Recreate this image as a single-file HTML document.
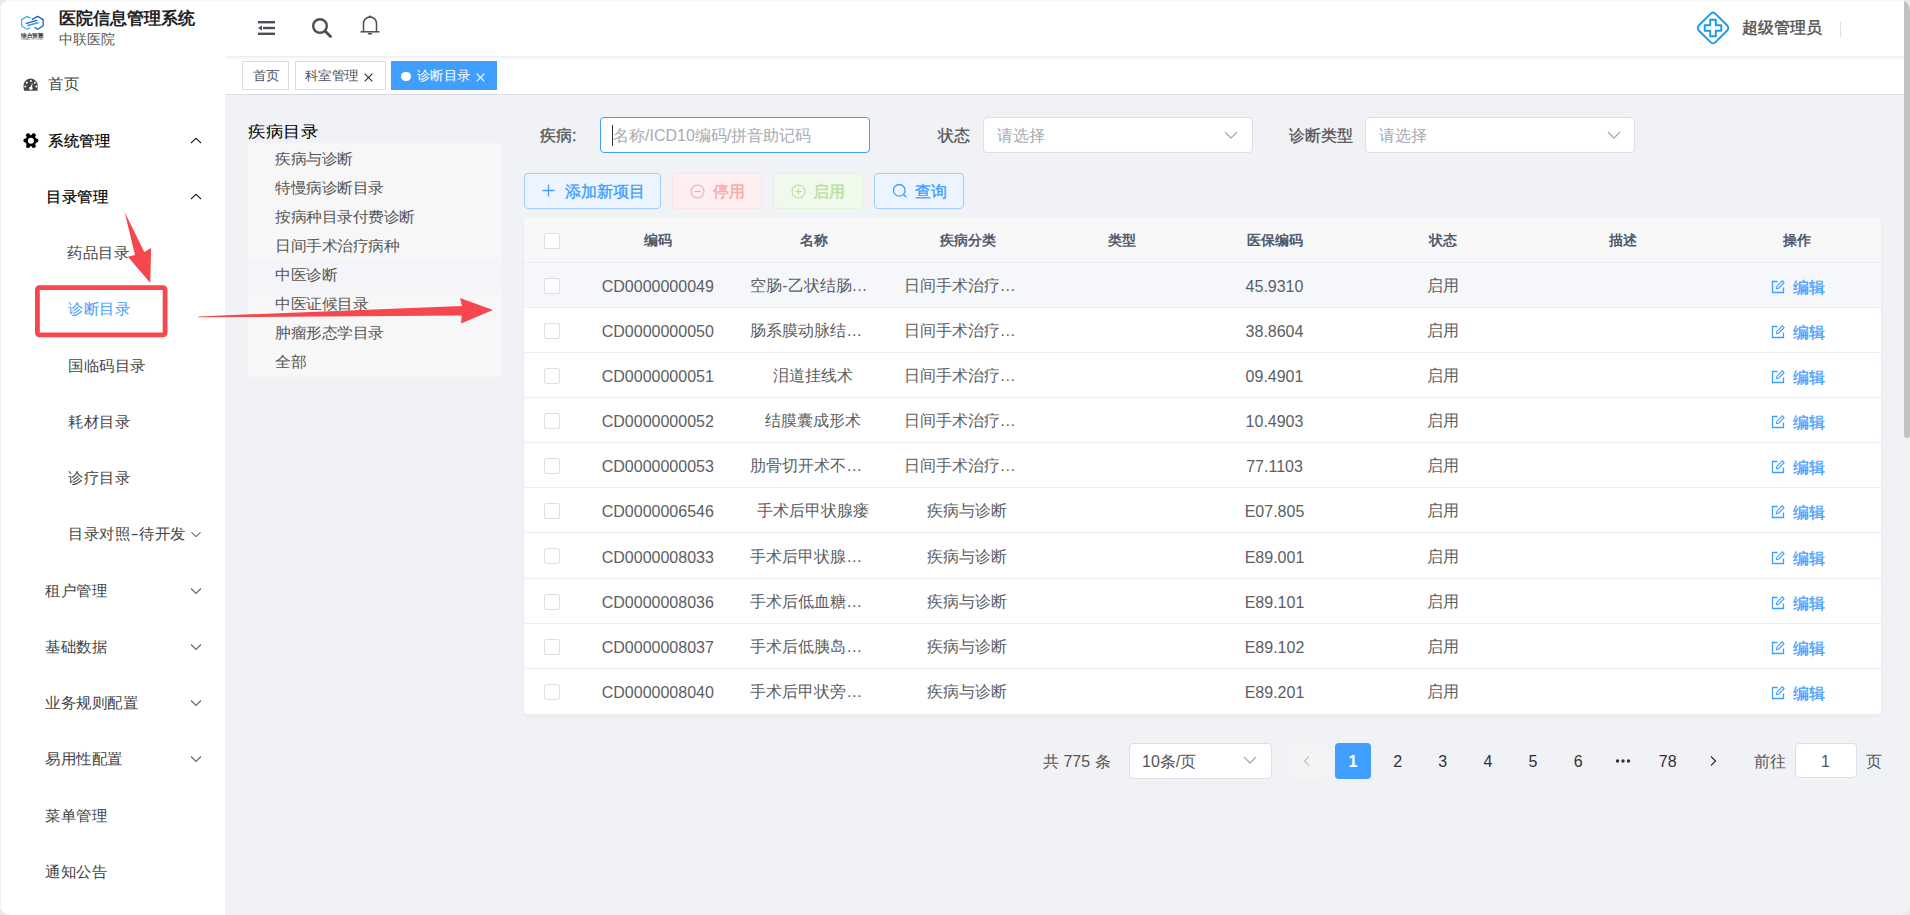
<!DOCTYPE html>
<html><head><meta charset="utf-8"><style>
*{box-sizing:border-box}
html,body{margin:0;padding:0}
body{width:1910px;height:915px;position:relative;overflow:hidden;background:#e9e9e9;font-family:"Liberation Sans",sans-serif;color:#303133}
.win{position:absolute;left:0;top:0;width:1910px;height:915px;background:#f0f2f5;border-radius:10px;overflow:hidden}
.a{position:absolute;white-space:nowrap}
.side{position:absolute;left:0;top:0;width:225px;height:915px;background:#fff}
.hdr{position:absolute;left:225px;top:0;width:1679px;height:56px;background:#fff}
.tabs{position:absolute;left:225px;top:56px;width:1679px;height:39px;background:#fff;border-bottom:1px solid #d8dce5;box-shadow:inset 0 4px 3px -2px #eceef1}
.tab{position:absolute;top:61px;height:29px;border:1px solid #d8dce5;background:#fff;font-size:13px;line-height:27px;color:#495060;white-space:nowrap}
.tt{display:inline-block;transform-origin:0 60%;transform:scale(0.955,0.92)}
.mi{position:absolute;font-size:16px;line-height:20px;transform-origin:0 50%;transform:scale(0.97,0.94);color:#303133;white-space:nowrap}
.scroll{position:absolute;left:1904px;top:0;width:6px;height:915px;background:#f1f1f1}
.thumb{position:absolute;left:1904px;top:0;width:6px;height:438px;background:#c1c1c1;border-radius:0 0 3px 3px}
.tree{position:absolute;left:248px;top:143px;width:253px;height:234px;background:#f7f7f8}
.ti{position:absolute;left:275px;font-size:16px;line-height:20px;transform-origin:0 50%;transform:scale(0.97,0.92);color:#555;white-space:nowrap}
.lbl{position:absolute;font-size:16px;line-height:20px;color:#555;white-space:nowrap;-webkit-text-stroke:0.3px currentColor}
.inp{position:absolute;background:#fff;border:1px solid #dcdfe6;border-radius:4px}
.ph{position:absolute;font-size:16px;line-height:20px;color:#a8abb2;white-space:nowrap}
.btn{position:absolute;top:173px;height:36px;border:1px solid;border-radius:4px}
.bt{position:absolute;font-size:16px;line-height:20px;white-space:nowrap;-webkit-text-stroke:0.35px currentColor}
.tbl{position:absolute;left:524px;top:218px;width:1357px;height:496px;background:#fff;border-radius:4px;overflow:hidden;box-shadow:0 2px 4px rgba(0,0,0,.04)}
.row{position:absolute;left:0;width:1357px;border-bottom:1px solid #ebeef5}
.cb{position:absolute;left:20px;width:16px;height:16px;border:1px solid #dcdfe6;border-radius:2px;background:#fff}
.th{position:absolute;font-size:14px;line-height:20px;color:#515a6e;font-weight:bold;white-space:nowrap;text-align:center}
.td{position:absolute;font-size:16px;line-height:20px;color:#5b5e63;white-space:nowrap;text-align:center}
.pg{position:absolute;font-size:16px;line-height:20px;color:#303133;white-space:nowrap;text-align:center}
</style></head><body><div class="win">
<div class="side"></div>
<svg class="a" style="left:17px;top:12px" width="32" height="32" viewBox="0 0 32 32">
<path d="M13.6 6.4 L10.1 4.4 L4.6 7.6 L4.6 14 L10.1 17.2 L13 15.5" fill="none" stroke="#45b1f0" stroke-width="1.3" stroke-linejoin="round"/>
<path d="M17.6 15.2 L20.6 17.2 L26.1 14 L26.1 7.6 L20.6 4.4 L14.9 7.6" fill="none" stroke="#1f5fc4" stroke-width="1.3" stroke-linejoin="round"/>
<path d="M9.4 11.3 L19.9 8.4" stroke="#1f63c8" stroke-width="1.4" stroke-linecap="round"/>
<path d="M10.8 13.5 L21 10.8" stroke="#2aa3ef" stroke-width="1.4" stroke-linecap="round"/>
<text x="4.2" y="24.6" font-size="5.2" font-weight="bold" fill="#333" textLength="22.6" lengthAdjust="spacingAndGlyphs">综合智慧</text>
<text x="4.2" y="28.2" font-size="2.6" fill="#666" textLength="22" lengthAdjust="spacingAndGlyphs">HEALTH LINK</text>
</svg>
<div class="a" style="left:59px;top:9px;font-size:17px;line-height:20px;font-weight:bold;color:#222">医院信息管理系统</div>
<div class="a" style="left:59px;top:29px;font-size:14px;line-height:20px;color:#555">中联医院</div>
<svg class="a" style="left:20px;top:75px" width="22" height="20" viewBox="0 0 22 20">
<path d="M4.1 15.8 L3.5 12.6 A7.3 7.3 0 1 1 17.7 12.6 L17.5 15.8 Z" fill="#444"/>
<circle cx="10.9" cy="5.9" r="1" fill="#fff"/><circle cx="6.9" cy="7.7" r="1" fill="#fff"/><circle cx="14.9" cy="7.7" r="1" fill="#fff"/>
<circle cx="5.3" cy="11.4" r="1" fill="#fff"/><circle cx="16.3" cy="11.4" r="1" fill="#fff"/>
<path d="M10.3 13 L12 8.2 L12.7 8.4 L11.6 13.2 Z" fill="#fff"/><circle cx="10.9" cy="13.2" r="1.7" fill="#fff"/>
</svg>
<svg class="a" style="left:20px;top:130px" width="22" height="22" viewBox="0 0 22 22">
<circle cx="10.9" cy="10.6" r="5.6" fill="#000"/>
<circle cx="8.1" cy="5.3" r="2.1" fill="#000"/><circle cx="13.7" cy="5.3" r="2.1" fill="#000"/>
<circle cx="16.3" cy="10.6" r="2.1" fill="#000"/><circle cx="5.5" cy="10.6" r="2.1" fill="#000"/>
<circle cx="8.1" cy="15.9" r="2.1" fill="#000"/><circle cx="13.7" cy="15.9" r="2.1" fill="#000"/>
<circle cx="10.9" cy="10.7" r="3" fill="#fff"/>
</svg>
<div class="mi" style="left:48.0px;top:74px;color:#444">首页</div>
<div class="mi" style="left:48.0px;top:131px;color:#000;-webkit-text-stroke:0.25px #000">系统管理</div>
<svg class="a" style="left:190px;top:136.8px" width="12" height="8" viewBox="0 0 12 8"><path d="M1 6L6 1.3L11 6" fill="none" stroke="#222" stroke-width="1.05"/></svg>
<div class="mi" style="left:46.2px;top:187px;color:#000;-webkit-text-stroke:0.25px #000">目录管理</div>
<svg class="a" style="left:190px;top:192.8px" width="12" height="8" viewBox="0 0 12 8"><path d="M1 6L6 1.3L11 6" fill="none" stroke="#222" stroke-width="1.05"/></svg>
<div class="mi" style="left:67.2px;top:243px;color:#444">药品目录</div>
<div class="mi" style="left:67.5px;top:299px;color:#409eff">诊断目录</div>
<div class="mi" style="left:67.5px;top:356px;color:#444">国临码目录</div>
<div class="mi" style="left:67.5px;top:412px;color:#444">耗材目录</div>
<div class="mi" style="left:67.5px;top:468px;color:#444">诊疗目录</div>
<div class="mi" style="left:68.0px;top:524px;color:#444">目录对照<span style="margin:0 2.4px 0 1.6px;display:inline-block;transform:scaleX(1.6)">-</span>待开发</div>
<svg class="a" style="left:190px;top:531.2px" width="12" height="8" viewBox="0 0 12 8"><path d="M1.5 1.3L6 5.6L10.5 1.3" fill="none" stroke="#606266" stroke-width="1.05"/></svg>
<div class="mi" style="left:44.5px;top:581px;color:#444">租户管理</div>
<svg class="a" style="left:190px;top:587px" width="12" height="8" viewBox="0 0 12 8"><path d="M1 1.5L6 6.5L11 1.5" fill="none" stroke="#606266" stroke-width="1.1"/></svg>
<div class="mi" style="left:44.5px;top:637px;color:#444">基础数据</div>
<svg class="a" style="left:190px;top:643px" width="12" height="8" viewBox="0 0 12 8"><path d="M1 1.5L6 6.5L11 1.5" fill="none" stroke="#606266" stroke-width="1.1"/></svg>
<div class="mi" style="left:44.5px;top:693px;color:#444">业务规则配置</div>
<svg class="a" style="left:190px;top:699px" width="12" height="8" viewBox="0 0 12 8"><path d="M1 1.5L6 6.5L11 1.5" fill="none" stroke="#606266" stroke-width="1.1"/></svg>
<div class="mi" style="left:44.5px;top:749px;color:#444">易用性配置</div>
<svg class="a" style="left:190px;top:755px" width="12" height="8" viewBox="0 0 12 8"><path d="M1 1.5L6 6.5L11 1.5" fill="none" stroke="#606266" stroke-width="1.1"/></svg>
<div class="mi" style="left:44.5px;top:806px;color:#444">菜单管理</div>
<div class="mi" style="left:44.5px;top:862px;color:#444">通知公告</div>
<div class="hdr"></div>
<div class="tabs"></div>
<svg class="a" style="left:257px;top:20px" width="19" height="16" viewBox="0 0 19 16">
<rect x="1" y="1" width="17" height="2.4" fill="#4a4f57"/>
<rect x="6" y="6.8" width="12" height="2.4" fill="#4a4f57"/>
<path d="M1 8 L5 5.4 L5 10.6 Z" fill="#4a4f57"/>
<rect x="1" y="12.6" width="17" height="2.4" fill="#4a4f57"/>
</svg>
<svg class="a" style="left:311px;top:17px" width="22" height="22" viewBox="0 0 22 22">
<circle cx="9" cy="9" r="6.8" fill="none" stroke="#4a4f57" stroke-width="2.4"/>
<path d="M14 14 L19.5 19.5" stroke="#4a4f57" stroke-width="2.8" stroke-linecap="round"/>
</svg>
<svg class="a" style="left:359px;top:14px" width="22" height="22" viewBox="0 0 22 22">
<path d="M4.5 17.5 L4.5 9.5 A6.5 6.5 0 0 1 17.5 9.5 L17.5 17.5" fill="none" stroke="#4a4f57" stroke-width="1.5"/>
<path d="M1.5 17.8 L20.5 17.8" stroke="#4a4f57" stroke-width="1.5"/>
<circle cx="11" cy="2.6" r="1.2" fill="#4a4f57"/>
<path d="M9.5 19.8 L12.5 19.8" stroke="#4a4f57" stroke-width="1.5" stroke-linecap="round"/>
</svg>
<svg class="a" style="left:1696px;top:11px" width="34" height="34" viewBox="0 0 34 34">
<path d="M17 1.5 C18 1.5 18.7 2 19.5 2.8 L31.2 14.5 C32.6 15.9 32.6 18.1 31.2 19.5 L19.5 31.2 C18.1 32.6 15.9 32.6 14.5 31.2 L2.8 19.5 C1.4 18.1 1.4 15.9 2.8 14.5 L14.5 2.8 C15.3 2 16 1.5 17 1.5 Z" fill="none" stroke="#1a9be6" stroke-width="1.9"/>
<path d="M14.2 8.7 L19.8 8.7 L19.8 14.2 L25.3 14.2 L25.3 19.8 L19.8 19.8 L19.8 25.3 L14.2 25.3 L14.2 19.8 L8.7 19.8 L8.7 14.2 L14.2 14.2 Z" fill="none" stroke="#1a9be6" stroke-width="1.9" stroke-linejoin="round"/>
</svg>
<div class="a" style="left:1742px;top:18px;font-size:16px;line-height:20px;color:#555;-webkit-text-stroke:0.45px #555">超级管理员</div>
<div class="a" style="left:1840px;top:22px;width:1px;height:15px;background:#dcdfe6"></div>
<div class="tab" style="left:242px;width:47px;padding-left:9.5px;font-size:14px"><span class="tt">首页</span></div>
<div class="tab" style="left:295px;width:91px;padding-left:9px;font-size:14px"><span class="tt">科室管理</span></div>
<svg class="a" style="left:364px;top:73px" width="9" height="9" viewBox="0 0 9 9"><path d="M0.6 0.6L8.4 8.4M8.4 0.6L0.6 8.4" stroke="#303133" stroke-width="1.15"/></svg>
<div class="tab" style="left:391px;width:106px;background:#409eff;border-color:#409eff;color:#fff;padding-left:25px;font-size:14px"><span class="tt">诊断目录</span><span style="position:absolute;left:9px;top:9.5px;width:9.5px;height:9.5px;border-radius:50%;background:#fff"></span></div>
<svg class="a" style="left:476px;top:73px" width="9" height="9" viewBox="0 0 9 9"><path d="M0.6 0.6L8.4 8.4M8.4 0.6L0.6 8.4" stroke="#fff" stroke-width="1.15"/></svg>
<div class="a" style="left:248px;top:121.5px;font-size:18px;line-height:20px;color:#000;transform-origin:0 50%;transform:scale(0.985,0.9)">疾病目录</div>
<div class="tree"></div>
<div class="a" style="left:248px;top:260px;width:253px;height:29px;background:#f4f5f9"></div>
<div class="ti" style="top:148.50px">疾病与诊断</div>
<div class="ti" style="top:177.64px">特慢病诊断目录</div>
<div class="ti" style="top:206.78px">按病种目录付费诊断</div>
<div class="ti" style="top:235.92px">日间手术治疗病种</div>
<div class="ti" style="top:265.06px">中医诊断</div>
<div class="ti" style="top:294.20px">中医证候目录</div>
<div class="ti" style="top:323.34px">肿瘤形态学目录</div>
<div class="ti" style="top:352.48px">全部</div>
<div class="lbl" style="left:539.5px;top:125.5px">疾病</div>
<div class="lbl" style="left:572px;top:125.5px">:</div>
<div class="inp" style="left:600px;top:117px;width:270px;height:36px;border-color:#409eff"></div>
<div class="a" style="left:611.5px;top:125px;width:1.4px;height:21px;background:#333"></div>
<div class="ph" style="left:613px;top:125.5px">名称/ICD10编码/拼音助记码</div>
<div class="lbl" style="left:937.5px;top:125.5px">状态</div>
<div class="inp" style="left:983px;top:117px;width:269.5px;height:36px"></div>
<div class="ph" style="left:997px;top:125.5px">请选择</div>
<svg class="a" style="left:1223px;top:130px" width="16" height="10" viewBox="0 0 16 10"><path d="M2 2L8 8L14 2" fill="none" stroke="#a8abb2" stroke-width="1.3"/></svg>
<div class="lbl" style="left:1288.5px;top:125.5px">诊断类型</div>
<div class="inp" style="left:1365px;top:117px;width:269.5px;height:36px"></div>
<div class="ph" style="left:1379px;top:125.5px">请选择</div>
<svg class="a" style="left:1606px;top:130px" width="16" height="10" viewBox="0 0 16 10"><path d="M2 2L8 8L14 2" fill="none" stroke="#a8abb2" stroke-width="1.3"/></svg>
<div class="btn" style="left:524px;width:137px;background:#ecf5ff;border-color:#a0cfff"></div>
<svg class="a" style="left:541px;top:183px" width="15" height="15" viewBox="0 0 15 15"><path d="M7.5 1.5V13.5M1.5 7.5H13.5" stroke="#409eff" stroke-width="1.3"/></svg>
<div class="bt" style="left:564.5px;top:181.5px;color:#409eff">添加新项目</div>
<div class="btn" style="left:672px;width:90px;background:#fef0f0;border-color:#fde2e2"></div>
<svg class="a" style="left:690px;top:183.5px" width="15" height="15" viewBox="0 0 15 15"><circle cx="7.5" cy="7.5" r="6.5" fill="none" stroke="#f9a7a7" stroke-width="1.1"/><path d="M4.5 7.5H10.5" stroke="#f9a7a7" stroke-width="1.1"/></svg>
<div class="bt" style="left:712.5px;top:181.5px;color:#f9a7a7">停用</div>
<div class="btn" style="left:773px;width:90px;background:#f0f9eb;border-color:#e1f3d8"></div>
<svg class="a" style="left:791px;top:183.5px" width="15" height="15" viewBox="0 0 15 15"><circle cx="7.5" cy="7.5" r="6.5" fill="none" stroke="#b3e19d" stroke-width="1.1"/><path d="M4.5 7.5H10.5M7.5 4.5V10.5" stroke="#b3e19d" stroke-width="1.1"/></svg>
<div class="bt" style="left:813px;top:181.5px;color:#b3e19d">启用</div>
<div class="btn" style="left:874px;width:90px;background:#ecf5ff;border-color:#a0cfff"></div>
<svg class="a" style="left:892px;top:183px" width="16" height="16" viewBox="0 0 16 16"><circle cx="7.3" cy="7.3" r="5.8" fill="none" stroke="#409eff" stroke-width="1.3"/><path d="M11.5 11.5L14.3 14.3" stroke="#409eff" stroke-width="1.3"/></svg>
<div class="bt" style="left:914.5px;top:181.5px;color:#409eff">查询</div>
<div class="tbl">
<div class="row" style="top:0;height:44.5px;background:#f8f8f9"></div>
<div class="row" style="top:44.50px;height:45.15px;background:#f5f7fa;"></div>
<div class="row" style="top:89.65px;height:45.15px;background:#fff;"></div>
<div class="row" style="top:134.80px;height:45.15px;background:#fff;"></div>
<div class="row" style="top:179.95px;height:45.15px;background:#fff;"></div>
<div class="row" style="top:225.10px;height:45.15px;background:#fff;"></div>
<div class="row" style="top:270.25px;height:45.15px;background:#fff;"></div>
<div class="row" style="top:315.40px;height:45.15px;background:#fff;"></div>
<div class="row" style="top:360.55px;height:45.15px;background:#fff;"></div>
<div class="row" style="top:405.70px;height:45.15px;background:#fff;"></div>
<div class="row" style="top:450.85px;height:45.15px;background:#fff;border-bottom:none;"></div>
<div class="cb" style="top:14.5px"></div>
<div class="th" style="left:73.8px;width:120px;top:12px">编码</div>
<div class="th" style="left:229.8px;width:120px;top:12px">名称</div>
<div class="th" style="left:383.5px;width:120px;top:12px">疾病分类</div>
<div class="th" style="left:537.7px;width:120px;top:12px">类型</div>
<div class="th" style="left:691.3px;width:120px;top:12px">医保编码</div>
<div class="th" style="left:859.2px;width:120px;top:12px">状态</div>
<div class="th" style="left:1038.7px;width:120px;top:12px">描述</div>
<div class="th" style="left:1213.0px;width:120px;top:12px">操作</div>
<div class="cb" style="top:59.50px"></div>
<div class="td" style="left:53.8px;width:160px;top:58.60px">CD0000000049</div>
<div class="td" style="left:226.2px;text-align:left;top:57.60px">空肠-乙状结肠…</div>
<div class="td" style="left:379.7px;text-align:left;top:57.60px">日间手术治疗…</div>
<div class="td" style="left:670.5px;width:160px;top:58.60px">45.9310</div>
<div class="td" style="left:858.6px;width:120px;top:57.60px">启用</div>
<svg class="a" style="left:1246.5px;top:61.60px" width="14" height="14" viewBox="0 0 14 14"><path d="M6.5 1.5H1.5V12.5H12.5V7.5" fill="none" stroke="#409eff" stroke-width="1.3"/><path d="M5.5 8.5L5.8 6.4L11.3 0.9L13.1 2.7L7.6 8.2Z" fill="none" stroke="#409eff" stroke-width="1.1"/></svg>
<div class="td" style="left:1269px;text-align:left;top:59.60px;color:#409eff;-webkit-text-stroke:0.3px #409eff">编辑</div>
<div class="cb" style="top:104.65px"></div>
<div class="td" style="left:53.8px;width:160px;top:103.75px">CD0000000050</div>
<div class="td" style="left:226.2px;text-align:left;top:102.75px">肠系膜动脉结…</div>
<div class="td" style="left:379.7px;text-align:left;top:102.75px">日间手术治疗…</div>
<div class="td" style="left:670.5px;width:160px;top:103.75px">38.8604</div>
<div class="td" style="left:858.6px;width:120px;top:102.75px">启用</div>
<svg class="a" style="left:1246.5px;top:106.75px" width="14" height="14" viewBox="0 0 14 14"><path d="M6.5 1.5H1.5V12.5H12.5V7.5" fill="none" stroke="#409eff" stroke-width="1.3"/><path d="M5.5 8.5L5.8 6.4L11.3 0.9L13.1 2.7L7.6 8.2Z" fill="none" stroke="#409eff" stroke-width="1.1"/></svg>
<div class="td" style="left:1269px;text-align:left;top:104.75px;color:#409eff;-webkit-text-stroke:0.3px #409eff">编辑</div>
<div class="cb" style="top:149.80px"></div>
<div class="td" style="left:53.8px;width:160px;top:148.90px">CD0000000051</div>
<div class="td" style="left:208.5px;width:160px;top:147.90px">泪道挂线术</div>
<div class="td" style="left:379.7px;text-align:left;top:147.90px">日间手术治疗…</div>
<div class="td" style="left:670.5px;width:160px;top:148.90px">09.4901</div>
<div class="td" style="left:858.6px;width:120px;top:147.90px">启用</div>
<svg class="a" style="left:1246.5px;top:151.90px" width="14" height="14" viewBox="0 0 14 14"><path d="M6.5 1.5H1.5V12.5H12.5V7.5" fill="none" stroke="#409eff" stroke-width="1.3"/><path d="M5.5 8.5L5.8 6.4L11.3 0.9L13.1 2.7L7.6 8.2Z" fill="none" stroke="#409eff" stroke-width="1.1"/></svg>
<div class="td" style="left:1269px;text-align:left;top:149.90px;color:#409eff;-webkit-text-stroke:0.3px #409eff">编辑</div>
<div class="cb" style="top:194.95px"></div>
<div class="td" style="left:53.8px;width:160px;top:194.05px">CD0000000052</div>
<div class="td" style="left:208.5px;width:160px;top:193.05px">结膜囊成形术</div>
<div class="td" style="left:379.7px;text-align:left;top:193.05px">日间手术治疗…</div>
<div class="td" style="left:670.5px;width:160px;top:194.05px">10.4903</div>
<div class="td" style="left:858.6px;width:120px;top:193.05px">启用</div>
<svg class="a" style="left:1246.5px;top:197.05px" width="14" height="14" viewBox="0 0 14 14"><path d="M6.5 1.5H1.5V12.5H12.5V7.5" fill="none" stroke="#409eff" stroke-width="1.3"/><path d="M5.5 8.5L5.8 6.4L11.3 0.9L13.1 2.7L7.6 8.2Z" fill="none" stroke="#409eff" stroke-width="1.1"/></svg>
<div class="td" style="left:1269px;text-align:left;top:195.05px;color:#409eff;-webkit-text-stroke:0.3px #409eff">编辑</div>
<div class="cb" style="top:240.10px"></div>
<div class="td" style="left:53.8px;width:160px;top:239.20px">CD0000000053</div>
<div class="td" style="left:226.2px;text-align:left;top:238.20px">肋骨切开术不…</div>
<div class="td" style="left:379.7px;text-align:left;top:238.20px">日间手术治疗…</div>
<div class="td" style="left:670.5px;width:160px;top:239.20px">77.1103</div>
<div class="td" style="left:858.6px;width:120px;top:238.20px">启用</div>
<svg class="a" style="left:1246.5px;top:242.20px" width="14" height="14" viewBox="0 0 14 14"><path d="M6.5 1.5H1.5V12.5H12.5V7.5" fill="none" stroke="#409eff" stroke-width="1.3"/><path d="M5.5 8.5L5.8 6.4L11.3 0.9L13.1 2.7L7.6 8.2Z" fill="none" stroke="#409eff" stroke-width="1.1"/></svg>
<div class="td" style="left:1269px;text-align:left;top:240.20px;color:#409eff;-webkit-text-stroke:0.3px #409eff">编辑</div>
<div class="cb" style="top:285.25px"></div>
<div class="td" style="left:53.8px;width:160px;top:284.35px">CD0000006546</div>
<div class="td" style="left:208.5px;width:160px;top:283.35px">手术后甲状腺瘘</div>
<div class="td" style="left:362.5px;width:160px;top:283.35px">疾病与诊断</div>
<div class="td" style="left:670.5px;width:160px;top:284.35px">E07.805</div>
<div class="td" style="left:858.6px;width:120px;top:283.35px">启用</div>
<svg class="a" style="left:1246.5px;top:287.35px" width="14" height="14" viewBox="0 0 14 14"><path d="M6.5 1.5H1.5V12.5H12.5V7.5" fill="none" stroke="#409eff" stroke-width="1.3"/><path d="M5.5 8.5L5.8 6.4L11.3 0.9L13.1 2.7L7.6 8.2Z" fill="none" stroke="#409eff" stroke-width="1.1"/></svg>
<div class="td" style="left:1269px;text-align:left;top:285.35px;color:#409eff;-webkit-text-stroke:0.3px #409eff">编辑</div>
<div class="cb" style="top:330.40px"></div>
<div class="td" style="left:53.8px;width:160px;top:329.50px">CD0000008033</div>
<div class="td" style="left:226.2px;text-align:left;top:328.50px">手术后甲状腺…</div>
<div class="td" style="left:362.5px;width:160px;top:328.50px">疾病与诊断</div>
<div class="td" style="left:670.5px;width:160px;top:329.50px">E89.001</div>
<div class="td" style="left:858.6px;width:120px;top:328.50px">启用</div>
<svg class="a" style="left:1246.5px;top:332.50px" width="14" height="14" viewBox="0 0 14 14"><path d="M6.5 1.5H1.5V12.5H12.5V7.5" fill="none" stroke="#409eff" stroke-width="1.3"/><path d="M5.5 8.5L5.8 6.4L11.3 0.9L13.1 2.7L7.6 8.2Z" fill="none" stroke="#409eff" stroke-width="1.1"/></svg>
<div class="td" style="left:1269px;text-align:left;top:330.50px;color:#409eff;-webkit-text-stroke:0.3px #409eff">编辑</div>
<div class="cb" style="top:375.55px"></div>
<div class="td" style="left:53.8px;width:160px;top:374.65px">CD0000008036</div>
<div class="td" style="left:226.2px;text-align:left;top:373.65px">手术后低血糖…</div>
<div class="td" style="left:362.5px;width:160px;top:373.65px">疾病与诊断</div>
<div class="td" style="left:670.5px;width:160px;top:374.65px">E89.101</div>
<div class="td" style="left:858.6px;width:120px;top:373.65px">启用</div>
<svg class="a" style="left:1246.5px;top:377.65px" width="14" height="14" viewBox="0 0 14 14"><path d="M6.5 1.5H1.5V12.5H12.5V7.5" fill="none" stroke="#409eff" stroke-width="1.3"/><path d="M5.5 8.5L5.8 6.4L11.3 0.9L13.1 2.7L7.6 8.2Z" fill="none" stroke="#409eff" stroke-width="1.1"/></svg>
<div class="td" style="left:1269px;text-align:left;top:375.65px;color:#409eff;-webkit-text-stroke:0.3px #409eff">编辑</div>
<div class="cb" style="top:420.70px"></div>
<div class="td" style="left:53.8px;width:160px;top:419.80px">CD0000008037</div>
<div class="td" style="left:226.2px;text-align:left;top:418.80px">手术后低胰岛…</div>
<div class="td" style="left:362.5px;width:160px;top:418.80px">疾病与诊断</div>
<div class="td" style="left:670.5px;width:160px;top:419.80px">E89.102</div>
<div class="td" style="left:858.6px;width:120px;top:418.80px">启用</div>
<svg class="a" style="left:1246.5px;top:422.80px" width="14" height="14" viewBox="0 0 14 14"><path d="M6.5 1.5H1.5V12.5H12.5V7.5" fill="none" stroke="#409eff" stroke-width="1.3"/><path d="M5.5 8.5L5.8 6.4L11.3 0.9L13.1 2.7L7.6 8.2Z" fill="none" stroke="#409eff" stroke-width="1.1"/></svg>
<div class="td" style="left:1269px;text-align:left;top:420.80px;color:#409eff;-webkit-text-stroke:0.3px #409eff">编辑</div>
<div class="cb" style="top:465.85px"></div>
<div class="td" style="left:53.8px;width:160px;top:464.95px">CD0000008040</div>
<div class="td" style="left:226.2px;text-align:left;top:463.95px">手术后甲状旁…</div>
<div class="td" style="left:362.5px;width:160px;top:463.95px">疾病与诊断</div>
<div class="td" style="left:670.5px;width:160px;top:464.95px">E89.201</div>
<div class="td" style="left:858.6px;width:120px;top:463.95px">启用</div>
<svg class="a" style="left:1246.5px;top:467.95px" width="14" height="14" viewBox="0 0 14 14"><path d="M6.5 1.5H1.5V12.5H12.5V7.5" fill="none" stroke="#409eff" stroke-width="1.3"/><path d="M5.5 8.5L5.8 6.4L11.3 0.9L13.1 2.7L7.6 8.2Z" fill="none" stroke="#409eff" stroke-width="1.1"/></svg>
<div class="td" style="left:1269px;text-align:left;top:465.95px;color:#409eff;-webkit-text-stroke:0.3px #409eff">编辑</div>
</div>
<div class="pg" style="left:1043px;top:752px;color:#555">共 775 条</div>
<div class="inp" style="left:1128.5px;top:743px;width:143px;height:36px"></div>
<div class="pg" style="left:1142px;top:752px;color:#555">10条/页</div>
<svg class="a" style="left:1242px;top:755px" width="16" height="10" viewBox="0 0 16 10"><path d="M2 2L8 8L14 2" fill="none" stroke="#a8abb2" stroke-width="1.3"/></svg>
<div class="a" style="left:1290px;top:743px;width:36px;height:36px;background:#f4f4f5;border-radius:3px"></div>
<svg class="a" style="left:1301px;top:755px" width="12" height="12" viewBox="0 0 12 12"><path d="M8 1.5L3.5 6L8 10.5" fill="none" stroke="#c0c4cc" stroke-width="1.2"/></svg>
<div class="a" style="left:1335px;top:743px;width:36px;height:36px;background:#409eff;border-radius:4px"></div>
<div class="pg" style="left:1335px;top:751.5px;width:36px;color:#fff;font-weight:bold">1</div>
<div class="pg" style="left:1379.7px;width:36px;top:751.5px">2</div>
<div class="pg" style="left:1424.7px;width:36px;top:751.5px">3</div>
<div class="pg" style="left:1469.9px;width:36px;top:751.5px">4</div>
<div class="pg" style="left:1514.9px;width:36px;top:751.5px">5</div>
<div class="pg" style="left:1560.1px;width:36px;top:751.5px">6</div>
<div class="pg" style="left:1649.7px;width:36px;top:751.5px">78</div>
<svg class="a" style="left:1613px;top:757px" width="20" height="8" viewBox="0 0 20 8"><circle cx="4.5" cy="4" r="1.7" fill="#303133"/><circle cx="10" cy="4" r="1.7" fill="#303133"/><circle cx="15.5" cy="4" r="1.7" fill="#303133"/></svg>
<svg class="a" style="left:1707px;top:755px" width="12" height="12" viewBox="0 0 12 12"><path d="M4 1.5L8.5 6L4 10.5" fill="none" stroke="#303133" stroke-width="1.2"/></svg>
<div class="pg" style="left:1754px;top:752px;color:#555">前往</div>
<div class="inp" style="left:1794.5px;top:743px;width:62px;height:35px"></div>
<div class="pg" style="left:1794.5px;width:62px;top:751.5px;color:#555">1</div>
<div class="pg" style="left:1866px;top:752px;color:#555">页</div>
<svg class="a" style="left:0;top:0" width="520" height="360" viewBox="0 0 520 360">
<rect x="37.4" y="287.6" width="127.7" height="47.2" rx="2" fill="none" stroke="#f5474d" stroke-width="4.8"/>
<path d="M124.6 212 L135 255 L127.9 256.8 L150.3 283 L151.1 248 L144.3 252 Z" fill="#f5474d"/>
<path d="M198.4 316.4 L462 305.9 L460 298 L493 310 L461 323.6 L461.7 315.4 L198.4 317.3 Z" fill="#f5474d"/>
</svg>
<div class="a" style="left:0;top:0;width:1910px;height:1px;background:#f7f7f7"></div>
<div class="a" style="left:0;top:0;width:1px;height:915px;background:#f2f2f2"></div>
<div class="scroll"></div>
<div class="thumb"></div>
</div></body></html>
